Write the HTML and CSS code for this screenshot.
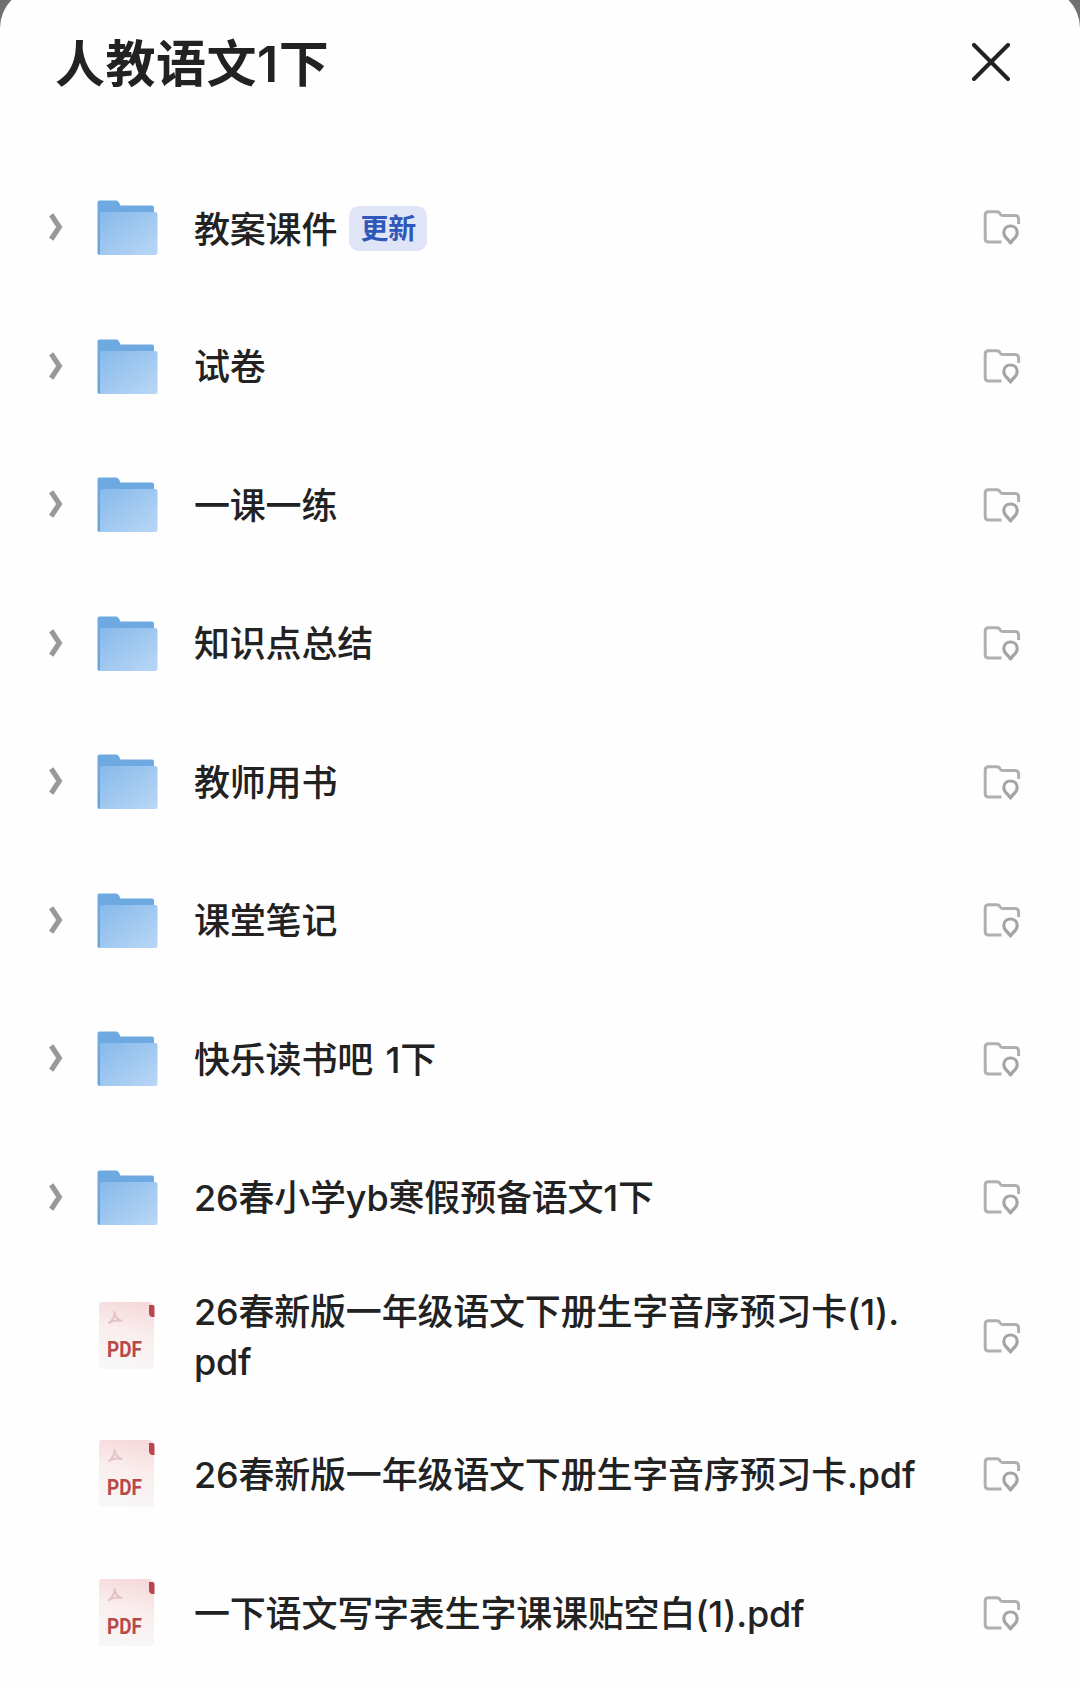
FILE: index.html
```html
<!DOCTYPE html>
<html lang="zh-CN">
<head>
  <meta charset="UTF-8">
  <meta name="viewport" content="width=device-width, initial-scale=1.0">
  <title>人教语文1下</title>
  <link rel="stylesheet" href="styles.css">
</head>
<body>
  <!-- shared icons -->
  <svg class="sprite" width="0" height="0">
    <defs>
      <linearGradient id="back" x1="0" y1="0" x2="0" y2="1">
        <stop offset="0" stop-color="#6eaae2"/>
        <stop offset="1" stop-color="#6ba3da"/>
      </linearGradient>
      <linearGradient id="front" x1="0" y1="0" x2="1" y2="1">
        <stop offset="0" stop-color="#86b9ea"/>
        <stop offset="1" stop-color="#b9d7f6"/>
      </linearGradient>
      <linearGradient id="paper" x1="0.6" y1="0" x2="0.4" y2="1">
        <stop offset="0" stop-color="#f6d9db"/>
        <stop offset="0.45" stop-color="#faeeee"/>
        <stop offset="1" stop-color="#f7f7f7"/>
      </linearGradient>
    </defs>
    <symbol id="arrow" viewBox="0 0 15 28">
      <path d="M3.2 1.8 L11.3 14 L3.2 26.2" fill="none" stroke="#999" stroke-width="5.2"/>
    </symbol>
    <symbol id="folder" viewBox="0 0 62 56">
      <path d="M0.5 2.5 Q0.5 0.5 2.5 0.5 H19 Q21 0.5 22 2.5 L23.5 5.5 H55 Q57 5.5 57 7.5 V20 H10 V55 H2.5 Q0.5 55 0.5 53 Z" fill="url(#back)"/>
      <path d="M3 14.5 Q3 12 5.5 12 H58.5 Q60.5 12 60.5 14 V53 Q60.5 55 58.5 55 H2 Q3 55 3 52 Z" fill="url(#front)"/>
    </symbol>
    <symbol id="pdf" viewBox="0 0 56 69">
      <path d="M3 1 H51 L55 5 V65 Q55 68 52 68 H3 Q0 68 0 65 V4 Q0 1 3 1 Z" fill="url(#paper)"/>
      <path d="M50 4 H53.5 Q55.5 4 55.5 6 V16 H53 Q50 15 50 12 Z" fill="#b9464c"/>
      <path d="M15.5 11 Q16 17 10 22 M15.5 11 Q16.5 18 22.5 20 M10 22 Q15 18.5 22.5 20" fill="none" stroke="#e3c3c7" stroke-width="2" stroke-linecap="round"/>
    </symbol>
    <symbol id="locate" viewBox="0 0 38 38">
      <path d="M18.5 33 H5.5 Q2.2 33 2.2 29.5 V6.2 Q2.2 2.7 5.5 2.7 H14 Q15.7 2.7 16.7 4.2 L17.5 5.5 Q18.2 6.5 19.7 6.5 H32 Q35.6 6.5 35.6 10 V15" fill="none" stroke="#b0b0b0" stroke-width="3"/>
      <path d="M27.5 34 Q26 31.5 22.8 28.5 Q20.8 26.3 20.8 23.6 C20.8 19.6 23.6 17 27.5 17 C31.4 17 34.2 19.6 34.2 23.6 Q34.2 26.3 32.2 28.5 Q29 31.5 27.5 34 Z" fill="none" stroke="#a4a4a4" stroke-width="3.2" stroke-linejoin="round"/>
    </symbol>
  </svg>

  <div class="sheet">
    <div class="header">
      <h1 class="title">人教语文1下</h1>
      <svg class="close" viewBox="0 0 38 38"><path d="M2 2 L36 36 M36 2 L2 36" fill="none" stroke="#222" stroke-width="4" stroke-linecap="round"/></svg>
    </div>
    <div class="list">
      <div class="row">
        <svg class="arrow"><use href="#arrow"/></svg>
        <svg class="folder"><use href="#folder"/></svg>
        <div class="name tagged">教案课件<span class="badge">更新</span></div>
        <svg class="locate"><use href="#locate"/></svg>
      </div>
      <div class="row">
        <svg class="arrow"><use href="#arrow"/></svg>
        <svg class="folder"><use href="#folder"/></svg>
        <div class="name">试卷</div>
        <svg class="locate"><use href="#locate"/></svg>
      </div>
      <div class="row">
        <svg class="arrow"><use href="#arrow"/></svg>
        <svg class="folder"><use href="#folder"/></svg>
        <div class="name">一课一练</div>
        <svg class="locate"><use href="#locate"/></svg>
      </div>
      <div class="row">
        <svg class="arrow"><use href="#arrow"/></svg>
        <svg class="folder"><use href="#folder"/></svg>
        <div class="name">知识点总结</div>
        <svg class="locate"><use href="#locate"/></svg>
      </div>
      <div class="row">
        <svg class="arrow"><use href="#arrow"/></svg>
        <svg class="folder"><use href="#folder"/></svg>
        <div class="name">教师用书</div>
        <svg class="locate"><use href="#locate"/></svg>
      </div>
      <div class="row">
        <svg class="arrow"><use href="#arrow"/></svg>
        <svg class="folder"><use href="#folder"/></svg>
        <div class="name">课堂笔记</div>
        <svg class="locate"><use href="#locate"/></svg>
      </div>
      <div class="row">
        <svg class="arrow"><use href="#arrow"/></svg>
        <svg class="folder"><use href="#folder"/></svg>
        <div class="name">快乐读书吧 1下</div>
        <svg class="locate"><use href="#locate"/></svg>
      </div>
      <div class="row">
        <svg class="arrow"><use href="#arrow"/></svg>
        <svg class="folder"><use href="#folder"/></svg>
        <div class="name">26春小学yb寒假预备语文1下</div>
        <svg class="locate"><use href="#locate"/></svg>
      </div>
      <div class="row file">
        <div class="pdf"><svg><use href="#pdf"/></svg><span>PDF</span></div>
        <div class="name">26春新版一年级语文下册生字音序预习卡(1).<br>pdf</div>
        <svg class="locate"><use href="#locate"/></svg>
      </div>
      <div class="row file">
        <div class="pdf"><svg><use href="#pdf"/></svg><span>PDF</span></div>
        <div class="name">26春新版一年级语文下册生字音序预习卡.pdf</div>
        <svg class="locate"><use href="#locate"/></svg>
      </div>
      <div class="row file">
        <div class="pdf"><svg><use href="#pdf"/></svg><span>PDF</span></div>
        <div class="name">一下语文写字表生字课课贴空白(1).pdf</div>
        <svg class="locate"><use href="#locate"/></svg>
      </div>
    </div>
  </div>
</body>
</html>
```

FILE: styles.css
```css
* {
  box-sizing: border-box;
}
body {
  margin: 0;
  background: #707070;
  font-family: Inter, "Noto Sans CJK SC", sans-serif;
  color: #222;
}
.sprite {
  position: absolute;
}
.sheet {
  height: 1698px;
  margin-top: -12px;
  padding-top: 12px;
  overflow: hidden;
  background: #fefefe;
  border-radius: 40px 40px 0 0;
}
.header {
  display: flex;
  justify-content: space-between;
  align-items: center;
  height: 124px;
  padding: 0 70px 0 55px;
}
.title {
  margin: 0;
  padding-top: 3px;
  font-size: 50px;
  font-weight: 600;
  line-height: 70px;
  letter-spacing: 0.5px;
}
.close {
  width: 38px;
  height: 38px;
}
.list {
  padding-top: 34.7px;
}
.row {
  display: flex;
  align-items: center;
  height: 138.56px;
  padding: 0 59px 0 48px;
}
.arrow {
  width: 15px;
  height: 28px;
  margin: 0 34px 2px 0;
}
.folder {
  width: 62px;
  height: 56px;
}
.name {
  display: flex;
  flex: 1;
  align-items: center;
  padding: 1px 0 0 35px;
  font-size: 36px;
  font-weight: 450;
  line-height: 50px;
  letter-spacing: -0.2px;
  word-spacing: 3px;
  white-space: nowrap;
}
.tagged {
  padding-top: 5px;
}
.badge {
  width: 78px;
  height: 45px;
  margin: 0 0 3px 12px;
  border-radius: 10px;
  background: #e0e4f7;
  color: #2f57b9;
  font-size: 28px;
  font-weight: 600;
  line-height: 46px;
  text-align: center;
}
.locate {
  width: 38px;
  height: 38px;
  margin-top: 1px;
}
.file {
  padding-left: 99px;
}
.file .name {
  display: block;
  padding-left: 39px;
}
.pdf {
  position: relative;
  width: 56px;
  height: 69px;
  margin-bottom: 2px;
}
.pdf svg {
  display: block;
  width: 56px;
  height: 69px;
}
.pdf span {
  position: absolute;
  left: 8px;
  top: 36px;
  color: #b8484a;
  font-family: Roboto, sans-serif;
  font-size: 22px;
  font-weight: 700;
  line-height: 26px;
  transform: scaleX(0.86);
  transform-origin: left;
}
```
